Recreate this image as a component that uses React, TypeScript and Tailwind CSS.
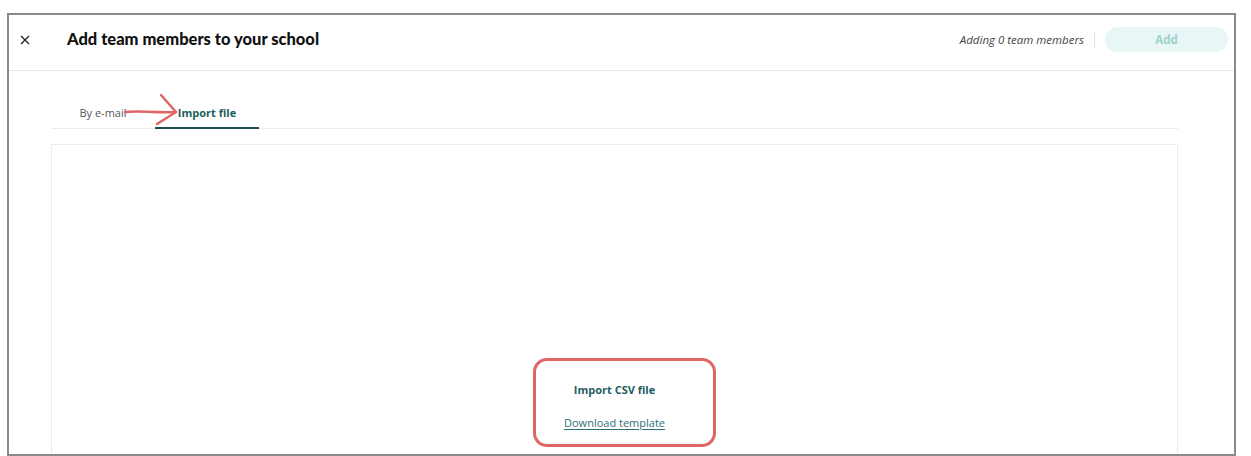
import React from "react";

function RedArrow() {
  return (
    <svg
      className="absolute left-[112px] top-[75px] pointer-events-none"
      width="62"
      height="40"
      viewBox="0 0 62 40"
    >
      <path
        d="M4 22 C 18 20, 30 23, 55 22"
        stroke="#e06666"
        strokeWidth="2.5"
        fill="none"
        strokeLinecap="round"
      />
      <path
        d="M40 5 L 55 22 L 36 34"
        stroke="#e06666"
        strokeWidth="2.5"
        fill="none"
        strokeLinecap="round"
        strokeLinejoin="round"
      />
    </svg>
  );
}

export default function App() {
  const body = "font-['Open_Sans',sans-serif]";

  return (
    <div className="w-[1251px] h-[456px] bg-white overflow-hidden pt-[13px] pl-[7px]">
      <div className="relative w-[1229px] h-[443px] border-2 border-[#8a8a8a] overflow-hidden bg-white">
        {/* header */}
        <div className="flex items-center h-[56px] pb-[6px] border-b border-[#e8e8e8]">
          <div className="w-[58px] flex justify-start pl-[11px]">
            <svg width="10" height="10" viewBox="0 0 10 10">
              <path d="M1 1 L9 9 M9 1 L1 9" stroke="#222" strokeWidth="1.3" />
            </svg>
          </div>
          <div className="font-['Lato',sans-serif] font-black text-[16.5px] text-[#111]">
            Add team members to your school
          </div>
          <div className="ml-auto flex items-center">
            <span className={body + " italic text-[11.5px] text-[#444]"}>
              Adding 0 team members
            </span>
            <div className="w-px h-[18px] bg-[#e2e2e2] mx-[10px]" />
            <button
              className={
                body +
                " w-[123px] h-[25px] rounded-full bg-[#e8f7f6] text-[#9fd1cd] text-[11.5px] font-bold mr-[6px]"
              }
            >
              Add
            </button>
          </div>
        </div>

        {/* tabs */}
        <div className="ml-[42px] mr-[56px] mt-[28px]">
          <div className={body + " flex items-end h-[30px] border-b border-[#ececec] text-[11px]"}>
            <div className="w-[104px] h-full flex items-center justify-center text-[#555]">
              By e-mail
            </div>
            <div className="w-[104px] h-full flex items-center justify-center font-bold text-[#1d5c5e] border-b-2 border-[#1d4f50] mb-[-1px]">
              Import file
            </div>
          </div>

          {/* drop area */}
          <div className="mt-[15px] h-[340px] border border-[#ececec] flex flex-col items-center pt-[237px]">
            <div className={body + " font-bold text-[11px] text-[#1d5c5e]"}>
              Import CSV file
            </div>
            <a className={body + " mt-[16px] text-[11px] text-[#2e6f73] underline underline-offset-2"}>
              Download template
            </a>
          </div>
        </div>

        <RedArrow />

        {/* annotation */}
        <div className="absolute left-[524px] top-[343px] w-[183px] h-[89px] rounded-[14px] border-[3px] border-[#e06666] pointer-events-none" />
      </div>
    </div>
  );
}
